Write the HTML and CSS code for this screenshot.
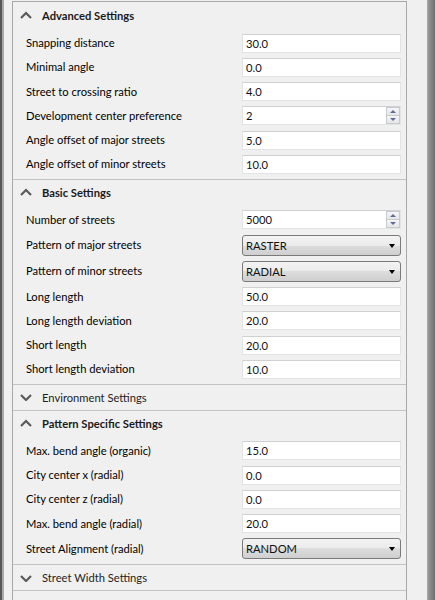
FILE: index.html
```html
<!DOCTYPE html>
<html>
<head>
<meta charset="utf-8">
<link rel="stylesheet" href="styles.css">
</head>
<body>
<div class="frame">
  <div class="edge-left"></div>
  <div class="panel">
    <section class="sec">
      <div class="hdr"><svg class="chev" viewBox="0 0 12 8"><path d="M1 7 L6 2 L11 7" /></svg><span class="title">Advanced Settings</span></div>
      <div class="body">
        <label>Snapping distance</label><div class="edit">30.0</div>
        <label>Minimal angle</label><div class="edit">0.0</div>
        <label>Street to crossing ratio</label><div class="edit">4.0</div>
        <label>Development center preference</label><div class="edit spin">2<span class="btns"><span class="b up"></span><span class="b dn"></span></span></div>
        <label>Angle offset of major streets</label><div class="edit">5.0</div>
        <label>Angle offset of minor streets</label><div class="edit">10.0</div>
      </div>
    </section>
    <section class="sec">
      <div class="hdr"><svg class="chev" viewBox="0 0 12 8"><path d="M1 7 L6 2 L11 7" /></svg><span class="title">Basic Settings</span></div>
      <div class="body">
        <label>Number of streets</label><div class="edit spin">5000<span class="btns"><span class="b up"></span><span class="b dn"></span></span></div>
        <label>Pattern of major streets</label><div class="combo">RASTER<span class="arr"></span></div>
        <label>Pattern of minor streets</label><div class="combo">RADIAL<span class="arr"></span></div>
        <label>Long length</label><div class="edit">50.0</div>
        <label>Long length deviation</label><div class="edit">20.0</div>
        <label>Short length</label><div class="edit">20.0</div>
        <label>Short length deviation</label><div class="edit">10.0</div>
      </div>
    </section>
    <section class="sec">
      <div class="hdr"><svg class="chev" viewBox="0 0 12 8"><path d="M1 2 L6 7 L11 2" /></svg><span class="title light">Environment Settings</span></div>
    </section>
    <section class="sec">
      <div class="hdr"><svg class="chev" viewBox="0 0 12 8"><path d="M1 7 L6 2 L11 7" /></svg><span class="title">Pattern Specific Settings</span></div>
      <div class="body">
        <label>Max. bend angle (organic)</label><div class="edit">15.0</div>
        <label>City center x (radial)</label><div class="edit">0.0</div>
        <label>City center z (radial)</label><div class="edit">0.0</div>
        <label>Max. bend angle (radial)</label><div class="edit">20.0</div>
        <label>Street Alignment (radial)</label><div class="combo">RANDOM<span class="arr"></span></div>
      </div>
    </section>
    <section class="sec">
      <div class="hdr"><svg class="chev" viewBox="0 0 12 8"><path d="M1 2 L6 7 L11 2" /></svg><span class="title light">Street Width Settings</span></div>
    </section>
  </div>
  <div class="gutter"></div>
  <div class="scroll"></div>
</div>
</body>
</html>
```
FILE: styles.css
```css
html, body {
  margin: 0;
  padding: 0;
  background: #f0f0f0;
}
body {
  font-family: Lato, "Liberation Sans", sans-serif;
  font-size: 11.2px;
  color: #000;
}
.frame {
  display: flex;
  height: 600px;
  overflow: hidden;
}
.edge-left {
  width: 12px;
  flex: none;
  background: linear-gradient(to right, #575757 0, #575757 2px, #a9a9a9 2px, #a9a9a9 4px, #f0f0f0 4px);
}
.panel {
  width: 393px;
  flex: none;
  margin-top: 1px;
  border: 1px solid #a8a8a8;
  border-bottom: none;
  background: #f0f0f0;
}
.gutter {
  width: 20px;
  flex: none;
}
.scroll {
  width: 8px;
  flex: none;
  background: linear-gradient(to right, #a8a8a8, #8a8a8a 40%, #6e6e6e);
}
.sec {
  border-bottom: 1px solid #c3c3c3;
}
.hdr {
  height: 25px;
  display: flex;
  align-items: center;
  padding-left: 7px;
  gap: 10px;
}
.sec:first-child .hdr {
  height: 26px;
}
.chev {
  width: 12px;
  height: 8px;
  flex: none;
}
.chev path {
  fill: none;
  stroke: #5b5b5b;
  stroke-width: 2.2;
}
.title {
  font-weight: bold;
  color: #1a1a1a;
}
.title.light {
  font-weight: normal;
  color: #1e1e1e;
}
.body {
  display: grid;
  grid-template-columns: 1fr 159px;
  row-gap: 5.25px;
  padding: 5.5px 5px 5px 13px;
  align-items: center;
}
.body label {
  line-height: 16px;
}
.edit {
  position: relative;
  box-sizing: border-box;
  height: 19px;
  background: #fff;
  border: 1px solid #e2e3e5;
  border-top-color: #cfd0d2;
  padding-left: 3px;
  line-height: 17px;
  color: #101020;
}
.btns {
  position: absolute;
  right: 0;
  top: 0;
  bottom: 0;
  width: 14px;
  display: flex;
  flex-direction: column;
}
.b {
  flex: 1;
  box-sizing: border-box;
  border: 1px solid #c8c9cc;
  background: linear-gradient(#f6f6f6, #e6e6e6);
  display: flex;
  align-items: center;
  justify-content: center;
}
.b.dn {
  border-top: none;
}
.b.up::after {
  content: "";
  border-left: 3px solid transparent;
  border-right: 3px solid transparent;
  border-bottom: 3px solid #5a6c96;
}
.b.dn::after {
  content: "";
  border-left: 3px solid transparent;
  border-right: 3px solid transparent;
  border-top: 3px solid #5a6c96;
}
.combo {
  position: relative;
  box-sizing: border-box;
  height: 21px;
  border: 1px solid #7a7a7a;
  border-radius: 3px;
  background: linear-gradient(#f3f3f3 0%, #ebebeb 50%, #dddddd 50%, #cfcfcf 100%);
  padding-left: 3px;
  line-height: 19px;
  color: #101010;
}
.arr {
  position: absolute;
  right: 5px;
  top: 8px;
  border-left: 3.5px solid transparent;
  border-right: 3.5px solid transparent;
  border-top: 4px solid #000;
}
```
